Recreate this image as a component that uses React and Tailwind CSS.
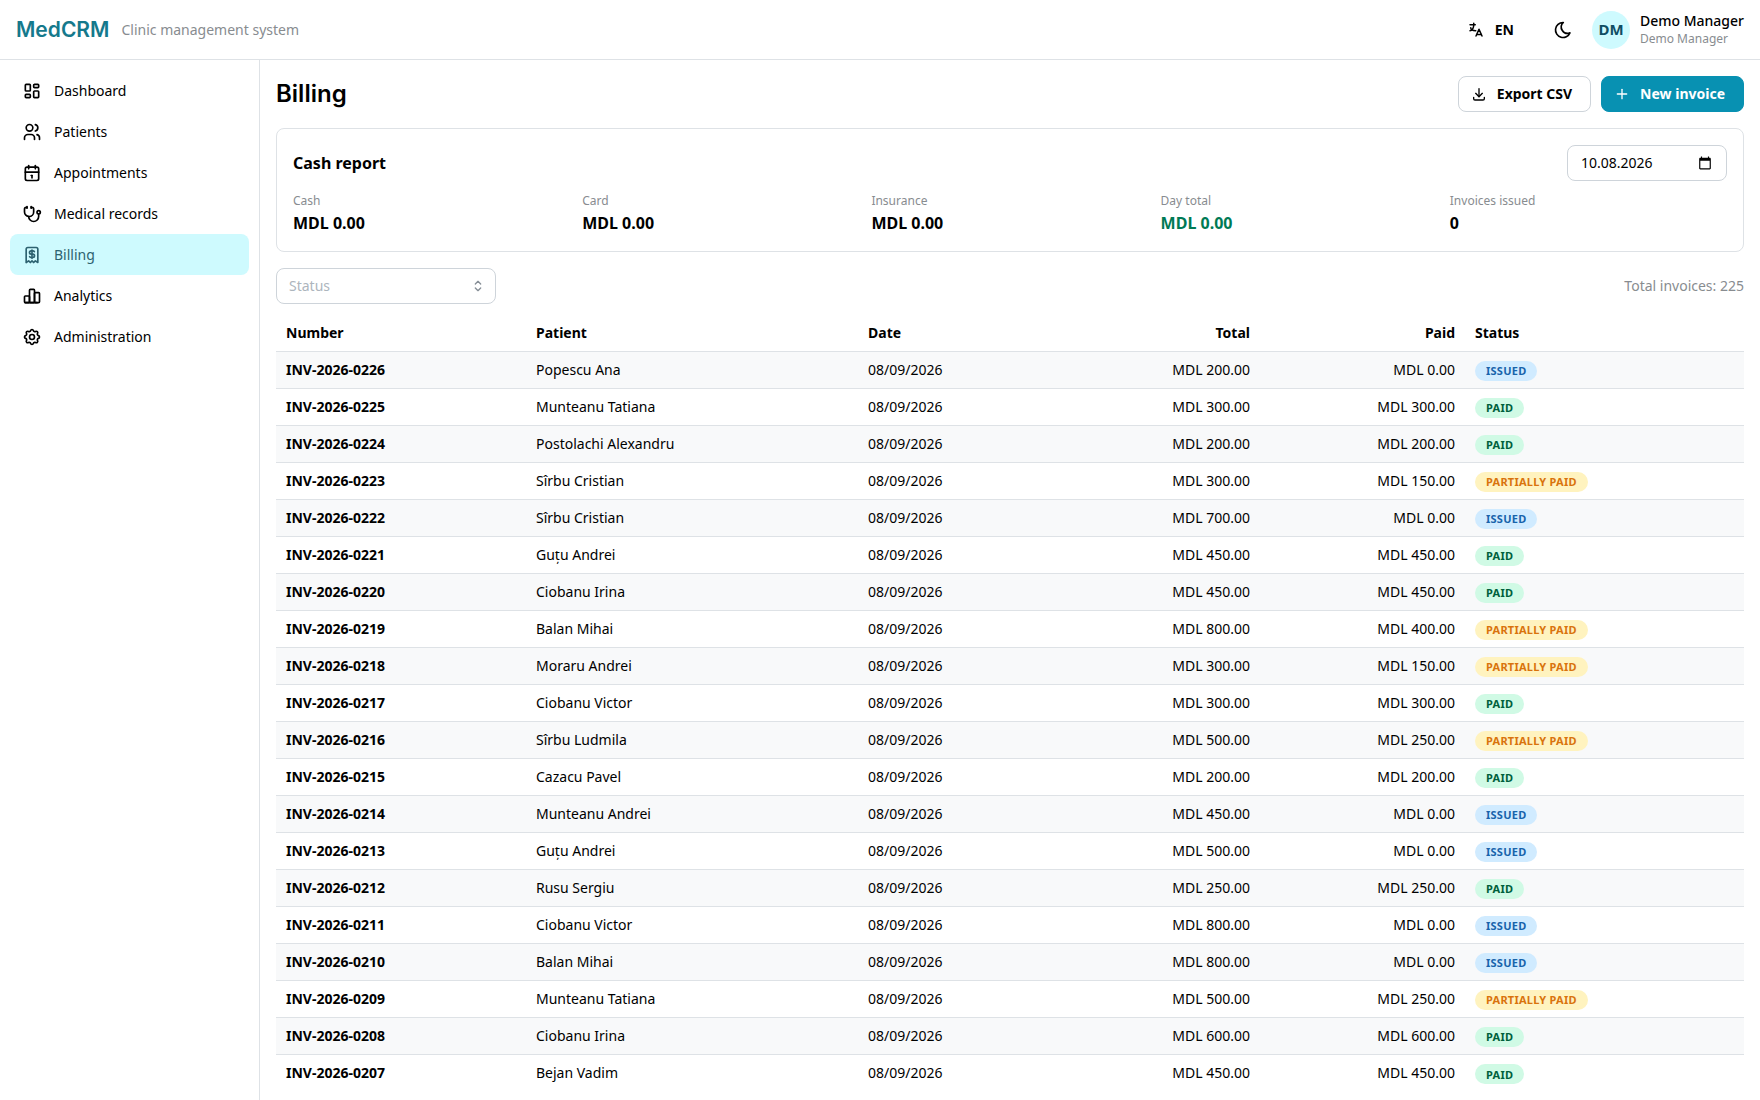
import {
  TbCalendar,
  TbChartBar,
  TbDownload,
  TbLanguage,
  TbLayoutDashboard,
  TbMoon,
  TbPlus,
  TbReceiptDollar,
  TbSelector,
  TbSettings,
  TbStethoscope,
  TbUsers,
} from "react-icons/tb";

const NAV_ITEMS = [
  { label: "Dashboard", icon: TbLayoutDashboard },
  { label: "Patients", icon: TbUsers },
  { label: "Appointments", icon: TbCalendar },
  { label: "Medical records", icon: TbStethoscope },
  { label: "Billing", icon: TbReceiptDollar, active: true },
  { label: "Analytics", icon: TbChartBar },
  { label: "Administration", icon: TbSettings },
];

const CASH_REPORT = [
  { label: "Cash", value: "MDL 0.00" },
  { label: "Card", value: "MDL 0.00" },
  { label: "Insurance", value: "MDL 0.00" },
  { label: "Day total", value: "MDL 0.00", highlight: true },
  { label: "Invoices issued", value: "0" },
];

const INVOICES = [
  { number: 226, patient: "Popescu Ana", total: 200, paid: 0 },
  { number: 225, patient: "Munteanu Tatiana", total: 300, paid: 300 },
  { number: 224, patient: "Postolachi Alexandru", total: 200, paid: 200 },
  { number: 223, patient: "Sîrbu Cristian", total: 300, paid: 150 },
  { number: 222, patient: "Sîrbu Cristian", total: 700, paid: 0 },
  { number: 221, patient: "Guțu Andrei", total: 450, paid: 450 },
  { number: 220, patient: "Ciobanu Irina", total: 450, paid: 450 },
  { number: 219, patient: "Balan Mihai", total: 800, paid: 400 },
  { number: 218, patient: "Moraru Andrei", total: 300, paid: 150 },
  { number: 217, patient: "Ciobanu Victor", total: 300, paid: 300 },
  { number: 216, patient: "Sîrbu Ludmila", total: 500, paid: 250 },
  { number: 215, patient: "Cazacu Pavel", total: 200, paid: 200 },
  { number: 214, patient: "Munteanu Andrei", total: 450, paid: 0 },
  { number: 213, patient: "Guțu Andrei", total: 500, paid: 0 },
  { number: 212, patient: "Rusu Sergiu", total: 250, paid: 250 },
  { number: 211, patient: "Ciobanu Victor", total: 800, paid: 0 },
  { number: 210, patient: "Balan Mihai", total: 800, paid: 0 },
  { number: 209, patient: "Munteanu Tatiana", total: 500, paid: 250 },
  { number: 208, patient: "Ciobanu Irina", total: 600, paid: 600 },
  { number: 207, patient: "Bejan Vadim", total: 450, paid: 450 },
];

function formatMdl(amount) {
  return `MDL ${amount.toFixed(2)}`;
}

function getStatus({ total, paid }) {
  if (paid === 0) {
    return "issued";
  }

  return paid < total ? "partial" : "paid";
}

function StatusBadge({ status }) {
  const classes = {
    issued: "bg-[#d0ebff] text-[#1864ab]",
    paid: "bg-[#d0fae5] text-[#005f3c]",
    partial: "bg-[#fff3bf] text-[#d9730d]",
  };
  const labels = {
    issued: "Issued",
    paid: "Paid",
    partial: "Partially paid",
  };

  return (
    <span
      className={`inline-flex h-5 items-center rounded-full px-[11px] align-middle text-[11px] font-bold uppercase tracking-[0.25px] ${classes[status]}`}
    >
      {labels[status]}
    </span>
  );
}

function Header() {
  return (
    <header className="flex h-[60px] items-center justify-between border-b border-[#dee2e6] px-4">
      <div className="flex items-center gap-3">
        <span className="font-[Inter,sans-serif] text-[21px] font-semibold text-[#15798c]">
          MedCRM
        </span>
        <span className="text-sm text-[#888c90]">Clinic management system</span>
      </div>

      <div className="flex items-center">
        <button
          type="button"
          className="flex h-[30px] items-center gap-2.5 px-3 text-sm font-bold"
        >
          <TbLanguage size={18} />
          EN
        </button>
        <button
          type="button"
          aria-label="Toggle color scheme"
          className="ml-5 flex size-[34px] items-center justify-center"
        >
          <TbMoon size={20} />
        </button>
        <div className="ml-3 flex items-center gap-2.5">
          <span className="flex size-[38px] items-center justify-center rounded-full bg-[#cefafe] text-[15px] font-bold text-[#104e64]">
            DM
          </span>
          <div>
            <p className="text-sm leading-[18px] font-medium">Demo Manager</p>
            <p className="text-xs leading-[18px] text-[#888c90]">Demo Manager</p>
          </div>
        </div>
      </div>
    </header>
  );
}

function Sidebar() {
  return (
    <nav className="w-[260px] shrink-0 border-r border-[#dee2e6] p-2.5">
      {NAV_ITEMS.map(({ label, icon: Icon, active }) => (
        <a
          key={label}
          href="#"
          className={`flex h-[41px] items-center gap-3 rounded-lg px-3 text-sm ${
            active ? "bg-[#cefafe] text-[#2d6270]" : ""
          }`}
        >
          <Icon size={20} />
          {label}
        </a>
      ))}
    </nav>
  );
}

function CashReport() {
  return (
    <section className="mt-4 rounded-lg border border-[#dee2e6] p-4">
      <div className="flex items-center justify-between">
        <h2 className="text-base font-bold">Cash report</h2>
        <div className="flex h-9 w-40 items-center rounded-lg border border-[#ced4da] px-3">
          <input
            type="text"
            aria-label="Report date"
            defaultValue="10.08.2026"
            className="w-full min-w-0 pl-px text-sm outline-none"
          />
          <svg viewBox="0 0 24 24" className="mr-0.5 size-3.5 shrink-0" aria-hidden="true">
            <path
              fill="currentColor"
              d="M20 3h-1V1h-2v2H7V1H5v2H4c-1.100 0-2 .9-2 2v16c0 1.100.9 2 2 2h16c1.100 0 2-.9 2-2V5c0-1.100-.9-2-2-2zm0 18H4V8h16v13z"
            />
          </svg>
        </div>
      </div>

      <dl className="mt-2.5 grid grid-cols-5 gap-3">
        {CASH_REPORT.map((item) => (
          <div key={item.label}>
            <dt className="text-xs leading-5 text-[#888c90]">{item.label}</dt>
            <dd
              className={`text-base leading-6 font-bold ${item.highlight ? "text-[#007a55]" : ""}`}
            >
              {item.value}
            </dd>
          </div>
        ))}
      </dl>
    </section>
  );
}

function InvoiceTable() {
  return (
    <table className="mt-3 w-full table-fixed text-left text-sm">
      <colgroup>
        <col className="w-[250px]" />
        <col className="w-[332px]" />
        <col className="w-[202px]" />
        <col className="w-[200px]" />
        <col className="w-[205px]" />
        <col className="w-[279px]" />
      </colgroup>
      <thead>
        <tr className="h-[35px] border-b border-[#dee2e6]">
          <th className="px-2.5 font-bold">Number</th>
          <th className="px-2.5 font-bold">Patient</th>
          <th className="px-2.5 font-bold">Date</th>
          <th className="px-2.5 text-right font-bold">Total</th>
          <th className="px-2.5 text-right font-bold">Paid</th>
          <th className="px-2.5 font-bold">Status</th>
        </tr>
      </thead>
      <tbody>
        {INVOICES.map((invoice) => (
          <tr
            key={invoice.number}
            className="h-[37px] border-b border-[#dee2e6] odd:bg-[#f8f9fa] last:border-b-0"
          >
            <td className="px-2.5 font-bold">INV-2026-0{invoice.number}</td>
            <td className="px-2.5">{invoice.patient}</td>
            <td className="px-2.5">08/09/2026</td>
            <td className="px-2.5 text-right">{formatMdl(invoice.total)}</td>
            <td className="px-2.5 text-right">{formatMdl(invoice.paid)}</td>
            <td className="px-2.5 pt-0.5">
              <StatusBadge status={getStatus(invoice)} />
            </td>
          </tr>
        ))}
      </tbody>
    </table>
  );
}

function BillingPage() {
  return (
    <main className="min-w-0 flex-1 px-4 pt-4 pb-2">
      <div className="flex items-center justify-between">
        <h1 className="font-[Inter,sans-serif] text-2xl leading-9 font-semibold">Billing</h1>
        <div className="flex gap-2.5">
          <button
            type="button"
            className="flex h-9 items-center gap-2.5 rounded-lg border border-[#ced4da] pr-[18px] pl-3 text-sm font-bold"
          >
            <TbDownload size={16} />
            Export CSV
          </button>
          <button
            type="button"
            className="flex h-9 items-center gap-2.5 rounded-lg border border-[#0891b2] bg-[#0891b2] pr-[18px] pl-3 text-sm font-bold text-white"
          >
            <TbPlus size={16} />
            New invoice
          </button>
        </div>
      </div>

      <CashReport />

      <div className="mt-4 flex items-center justify-between">
        <div className="relative w-[220px]">
          <select
            aria-label="Status"
            defaultValue=""
            className="h-9 w-full appearance-none rounded-lg border border-[#ced4da] px-3 text-sm text-[#adb5bd]"
          >
            <option value="">Status</option>
            <option value="issued">Issued</option>
            <option value="paid">Paid</option>
            <option value="partial">Partially paid</option>
          </select>
          <TbSelector
            size={16}
            className="pointer-events-none absolute inset-y-0 right-2.5 my-auto text-[#868e96]"
          />
        </div>
        <p className="text-sm text-[#888c90]">Total invoices: 225</p>
      </div>

      <InvoiceTable />
    </main>
  );
}

export default function App() {
  return (
    <div className="flex min-h-screen flex-col bg-white font-['Noto_Sans',sans-serif] text-black">
      <Header />
      <div className="flex flex-1">
        <Sidebar />
        <BillingPage />
      </div>
    </div>
  );
}
